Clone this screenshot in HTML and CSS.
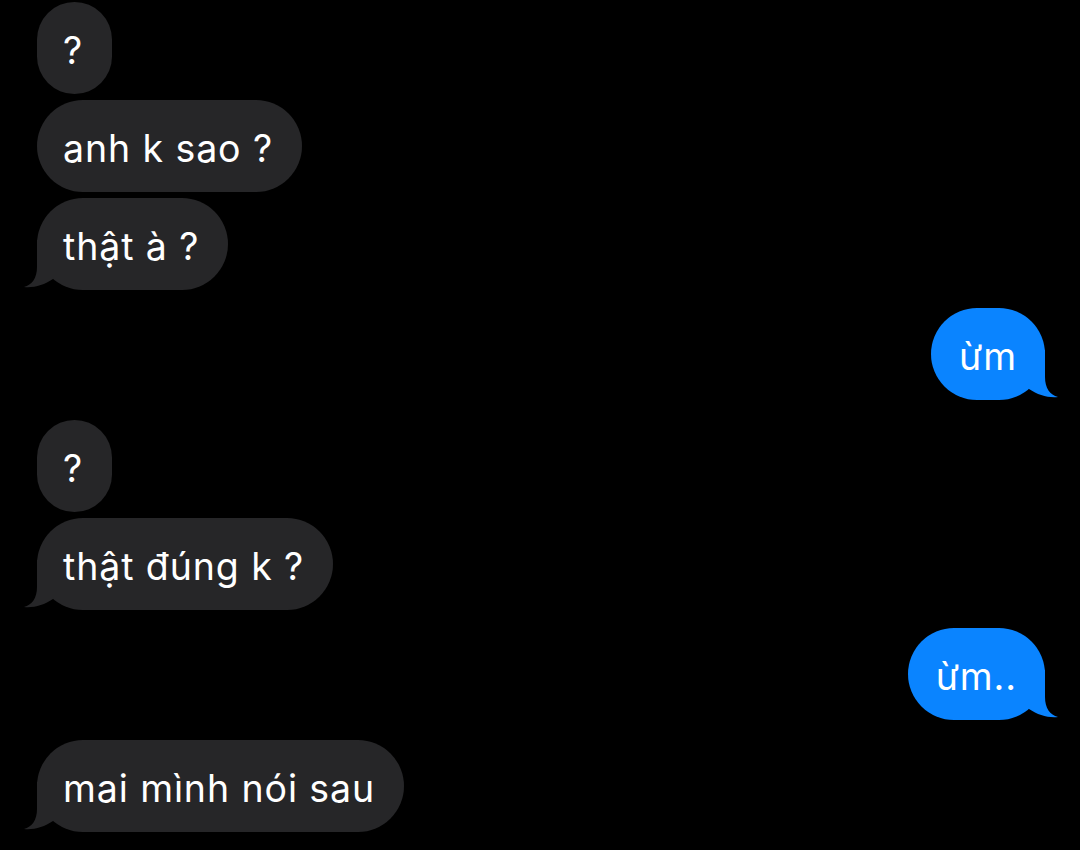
FILE: index.html
```html
<!DOCTYPE html>
<html lang="vi">
<head>
    <meta charset="UTF-8">
    <meta name="viewport" content="width=device-width, initial-scale=1.0">
    <title>Tin nhắn</title>
    <link rel="stylesheet" href="styles.css">
</head>
<body>
    <div class="chat">
        <div class="group them">
            <div class="bubble"><span>?</span></div>
            <div class="bubble"><span>anh k sao ?</span></div>
            <div class="bubble tail"><span>thật à ?</span>
                <svg class="tail-svg" width="53" height="50" viewBox="0 0 53 50"><path d="M13,0 L13,27 C13,38 8,45 0,47 C10,48 20,45 29,39 L29,0 Z"/></svg>
            </div>
        </div>

        <div class="group me">
            <div class="bubble tail"><span>ừm</span>
                <svg class="tail-svg" width="53" height="50" viewBox="0 0 53 50"><path d="M13,0 L13,27 C13,38 8,45 0,47 C10,48 20,45 29,39 L29,0 Z"/></svg>
            </div>
        </div>

        <div class="group them">
            <div class="bubble"><span>?</span></div>
            <div class="bubble tail"><span>thật đúng k ?</span>
                <svg class="tail-svg" width="53" height="50" viewBox="0 0 53 50"><path d="M13,0 L13,27 C13,38 8,45 0,47 C10,48 20,45 29,39 L29,0 Z"/></svg>
            </div>
        </div>

        <div class="group me">
            <div class="bubble tail"><span>ừm..</span>
                <svg class="tail-svg" width="53" height="50" viewBox="0 0 53 50"><path d="M13,0 L13,27 C13,38 8,45 0,47 C10,48 20,45 29,39 L29,0 Z"/></svg>
            </div>
        </div>

        <div class="group them">
            <div class="bubble tail"><span>mai mình nói sau</span>
                <svg class="tail-svg" width="53" height="50" viewBox="0 0 53 50"><path d="M13,0 L13,27 C13,38 8,45 0,47 C10,48 20,45 29,39 L29,0 Z"/></svg>
            </div>
        </div>
    </div>
</body>
</html>
```

FILE: styles.css
```css
body {
    margin: 0;
    background-color: #000;
    font-family: Inter, "Noto Sans", sans-serif;
}
.chat {
    display: flex;
    flex-direction: column;
    gap: 18px;
    padding: 2px 35px 0 37px;
}
.group {
    display: flex;
    flex-direction: column;
    gap: 6px;
}
.me + .them {
    margin-top: 2px;
}
.them {
    align-items: flex-start;
}
.me {
    align-items: flex-end;
}
.bubble {
    position: relative;
    height: 92px;
    display: flex;
    align-items: center;
    padding: 0 29px 0 26px;
    border-radius: 46px;
    color: #fff;
    font-size: 37.5px;
    letter-spacing: 0.9px;
    box-sizing: border-box;
}
.bubble span {
    position: relative;
    z-index: 1;
    padding-top: 4px;
}
.them .bubble {
    background-color: #262628;
}
.me .bubble {
    background-color: #0a84ff;
    padding: 0 28px;
}
.tail-svg {
    position: absolute;
    bottom: 0;
    left: -13px;
}
.them .tail-svg {
    fill: #262628;
}
.me .tail-svg {
    left: auto;
    right: -13px;
    fill: #0a84ff;
    transform: scaleX(-1);
}
```
